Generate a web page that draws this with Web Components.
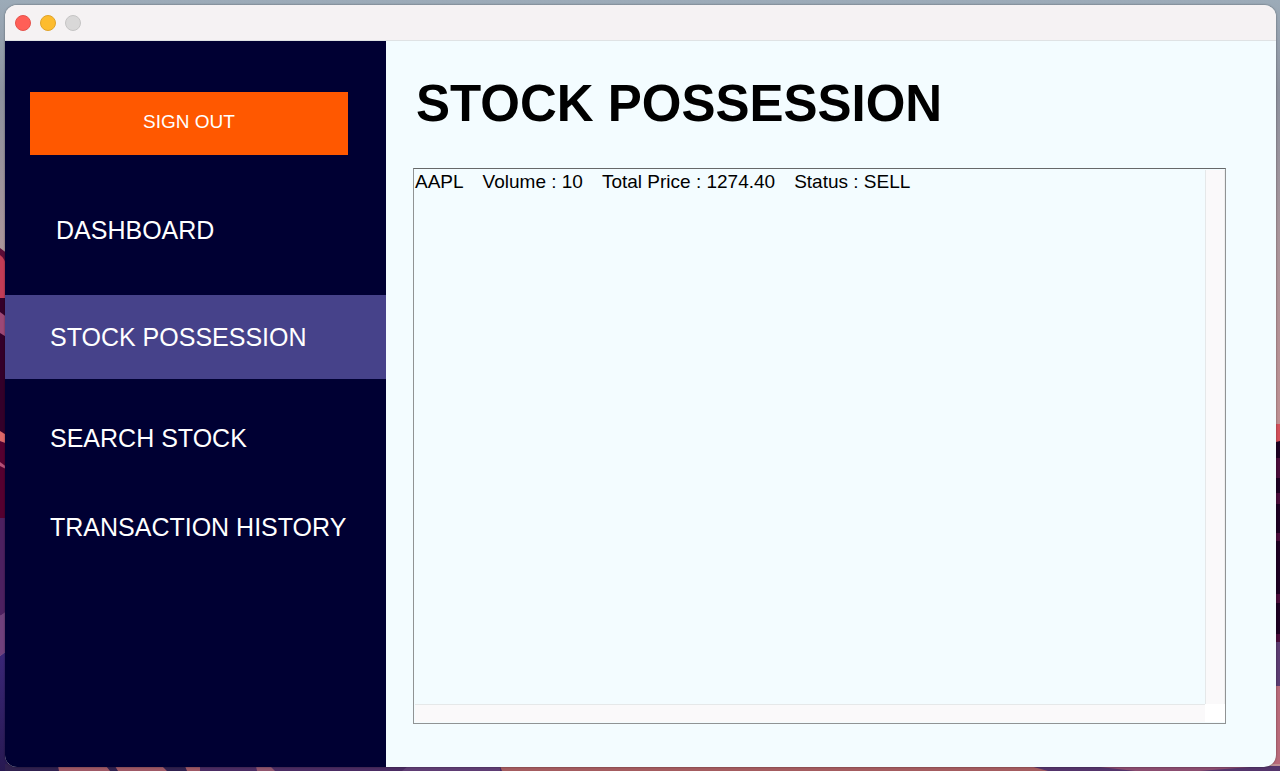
<!DOCTYPE html>
<html lang="en">
<head>
<meta charset="utf-8">
<title>Stock Possession</title>
<style>
  html, body { margin: 0; }
  body { font-family: "Liberation Sans", Arial, sans-serif; color: #000; }
</style>
</head>
<body>
<desk-backdrop>
  <app-window>
    <side-bar slot="side">
      <sign-out-button slot="action">SIGN OUT</sign-out-button>
      <nav-item href="#dashboard" indented>DASHBOARD</nav-item>
      <nav-item href="#possession" active>STOCK POSSESSION</nav-item>
      <nav-item href="#search">SEARCH STOCK</nav-item>
      <nav-item href="#history">TRANSACTION HISTORY</nav-item>
    </side-bar>
    <page-view heading="STOCK POSSESSION">
      <scroll-list>
        <stock-row symbol="AAPL" volume="10" price="1274.40" status="SELL"></stock-row>
      </scroll-list>
    </page-view>
  </app-window>
</desk-backdrop>

<script>
class Base extends HTMLElement {
  constructor() {
    super();
    this.attachShadow({ mode: 'open' });
  }
  connectedCallback() {
    this.shadowRoot.innerHTML = this.render();
  }
}

customElements.define('desk-backdrop', class extends Base {
  render() {
    return `<style>
      :host { display: flex; position: relative; box-sizing: border-box; min-height: 100vh; padding: 5px 4px 4px 5px; overflow: hidden; }
      svg { position: absolute; inset: 0; width: 100%; height: 100%; }
      ::slotted(*) { flex: 1; position: relative; }
    </style>
    <svg viewBox="0 0 1280 771" preserveAspectRatio="none" aria-hidden="true">
      <defs>
        <linearGradient id="sky" x1="0" y1="0" x2="0" y2="1">
          <stop offset="0" stop-color="#9cabb8"/><stop offset=".12" stop-color="#8d929f"/>
          <stop offset=".3" stop-color="#a8959b"/><stop offset=".55" stop-color="#bf8f92"/>
        </linearGradient>
        <linearGradient id="dusk" x1="0" y1="0" x2="0" y2="1">
          <stop offset="0" stop-color="#3a2678"/><stop offset="1" stop-color="#281952"/>
        </linearGradient>
      </defs>
      <rect width="1280" height="771" fill="url(#sky)"/>
      <path d="M0 248L8 254V302H0z" fill="#5c0c38"/>
      <path d="M0 255Q5 258 8 270V298H0z" fill="#c23c56"/>
      <path d="M0 298H8V440H0z" fill="#34002a"/>
      <path d="M0 312L8 318V338L0 333z" fill="#9c4876"/>
      <path d="M0 431L8 436V444L0 441z" fill="#dc6668"/>
      <path d="M0 441L8 444V518H0z" fill="#550030"/>
      <path d="M0 462L8 468V470L0 466z" fill="#b55078"/>
      <path d="M0 518H8V612L0 616z" fill="#4d2060"/>
      <path d="M0 616L8 610V650L0 656z" fill="#70407c"/>
      <path d="M0 656L8 650V771H0z" fill="url(#dusk)"/>
      <path d="M1272 424H1280V446H1272z" fill="#d2505a"/>
      <path d="M1272 443L1280 441V642H1272z" fill="#1d0022"/>
      <path d="M1272 458H1280V478H1272zM1272 493H1280V504H1272zM1272 533H1280V541H1272zM1272 594H1280V603H1272zM1272 634H1280V642H1272z" fill="#4a0c3a"/>
      <path d="M1272 642H1280V686H1272z" fill="#5c3c72"/>
      <path d="M1272 686H1280V764H1272z" fill="#b96a7a"/>
      <path d="M5 764H500V771H5z" fill="#30204f"/>
      <path d="M58 766H106L110 771H59zM115 766H162L167 771H118zM185 766H200V771H187z" fill="#9f5966"/>
      <path d="M200 766H503V771H200z" fill="#4b2c63"/>
      <path d="M256 766H270L275 771H257z" fill="#91566f"/>
      <path d="M408 766H500V771H402z" fill="#5f3d74"/>
      <path d="M500 766H1040L1050 771H502z" fill="#a45c60"/>
      <path d="M1030 766H1280V771H1048z" fill="#54346b"/>
      <path d="M1100 767H1250L1200 771H1135z" fill="#8b4d70"/>
    </svg>
    <slot></slot>`;
  }
});

customElements.define('app-window', class extends Base {
  render() {
    return `<style>
      :host { display: grid; grid-template-rows: 36px 1fr; border-radius: 12px; overflow: hidden; background: #f3fcff; box-shadow: 0 0 2px rgba(0,0,0,.5); }
      header { display: flex; align-items: center; gap: 9px; padding-left: 10px; box-sizing: border-box; background: #f5f2f3; border-bottom: 1px solid #dfe2e4; }
      button { width: 16px; height: 16px; padding: 0; border-radius: 50%; border: 1px solid; background: none; }
      .close { background: #ff5f57; border-color: #e5534c; }
      .min { background: #fdbc2e; border-color: #dfa32a; }
      .max { background: #d9d8d8; border-color: #c5c4c4; }
      .content { display: grid; grid-template-columns: 381px 1fr; }
    </style>
    <header>
      <button class="close" aria-label="Close"></button>
      <button class="min" aria-label="Minimize"></button>
      <button class="max" aria-label="Zoom" disabled></button>
    </header>
    <div class="content"><slot name="side"></slot><slot></slot></div>`;
  }
});

customElements.define('side-bar', class extends Base {
  render() {
    return `<style>
      :host { display: block; background: #000033; padding-top: 51px; }
      nav { display: flex; flex-direction: column; padding-top: 33px; }
    </style>
    <slot name="action"></slot>
    <nav><slot></slot></nav>`;
  }
});

customElements.define('sign-out-button', class extends Base {
  render() {
    return `<style>
      :host { display: block; padding: 0 38px 0 25px; }
      button { display: block; width: 100%; height: 63px; border: 0; padding: 0 0 4px; background: #ff5800; color: #fff; font: inherit; font-size: 19px; line-height: 24px; }
    </style>
    <button type="button"><slot></slot></button>`;
  }
});

customElements.define('nav-item', class extends Base {
  render() {
    return `<style>
      :host { display: block; margin-bottom: 5px; }
      :host([indented]) { margin-bottom: 23px; }
      :host([active]) { background: #46428a; margin-bottom: 17px; }
      a { display: block; padding-left: 45px; color: #fff; text-decoration: none; font-size: 25px; line-height: 84px; white-space: nowrap; }
      :host([indented]) a { padding-left: 51px; }
    </style>
    <a href="${this.getAttribute('href')}"><slot></slot></a>`;
  }
});

customElements.define('page-view', class extends Base {
  render() {
    return `<style>
      :host { display: flex; flex-direction: column; padding: 33px 50px 43px 27px; }
      h1 { margin: 0 0 34px; padding-left: 3px; font-size: 51px; line-height: 60px; font-weight: bold; }
      ::slotted(*) { flex: 1; }
    </style>
    <h1>${this.getAttribute('heading')}</h1>
    <slot></slot>`;
  }
});

customElements.define('scroll-list', class extends Base {
  render() {
    return `<style>
      :host { display: grid; grid-template: 1fr 18px / 1fr 20px; border: 1px solid #909394; border-top-color: #666869; padding: 1px; padding-right: 0; background: #f3fcff; }
      ul { margin: 0; padding: 0; list-style: none; }
      .v { background: #faf9fa; border-left: 1px solid #e5e8e9; border-right: 1px solid #efefef; }
      .h { background: #faf9fa; border-top: 1px solid #e5e8e9; }
      .corner { background: #fff; }
    </style>
    <ul><slot></slot></ul>
    <div class="v"></div>
    <div class="h"></div>
    <div class="corner"></div>`;
  }
});

customElements.define('stock-row', class extends Base {
  render() {
    const a = n => this.getAttribute(n);
    return `<style>
      :host { display: block; }
      li { display: flex; gap: 19px; list-style: none; font-size: 19px; line-height: 24px; white-space: nowrap; }
    </style>
    <li><span>${a('symbol')}</span><span>Volume : ${a('volume')}</span><span>Total Price : ${a('price')}</span><span>Status : ${a('status')}</span></li>`;
  }
});
</script>
</body>
</html>
